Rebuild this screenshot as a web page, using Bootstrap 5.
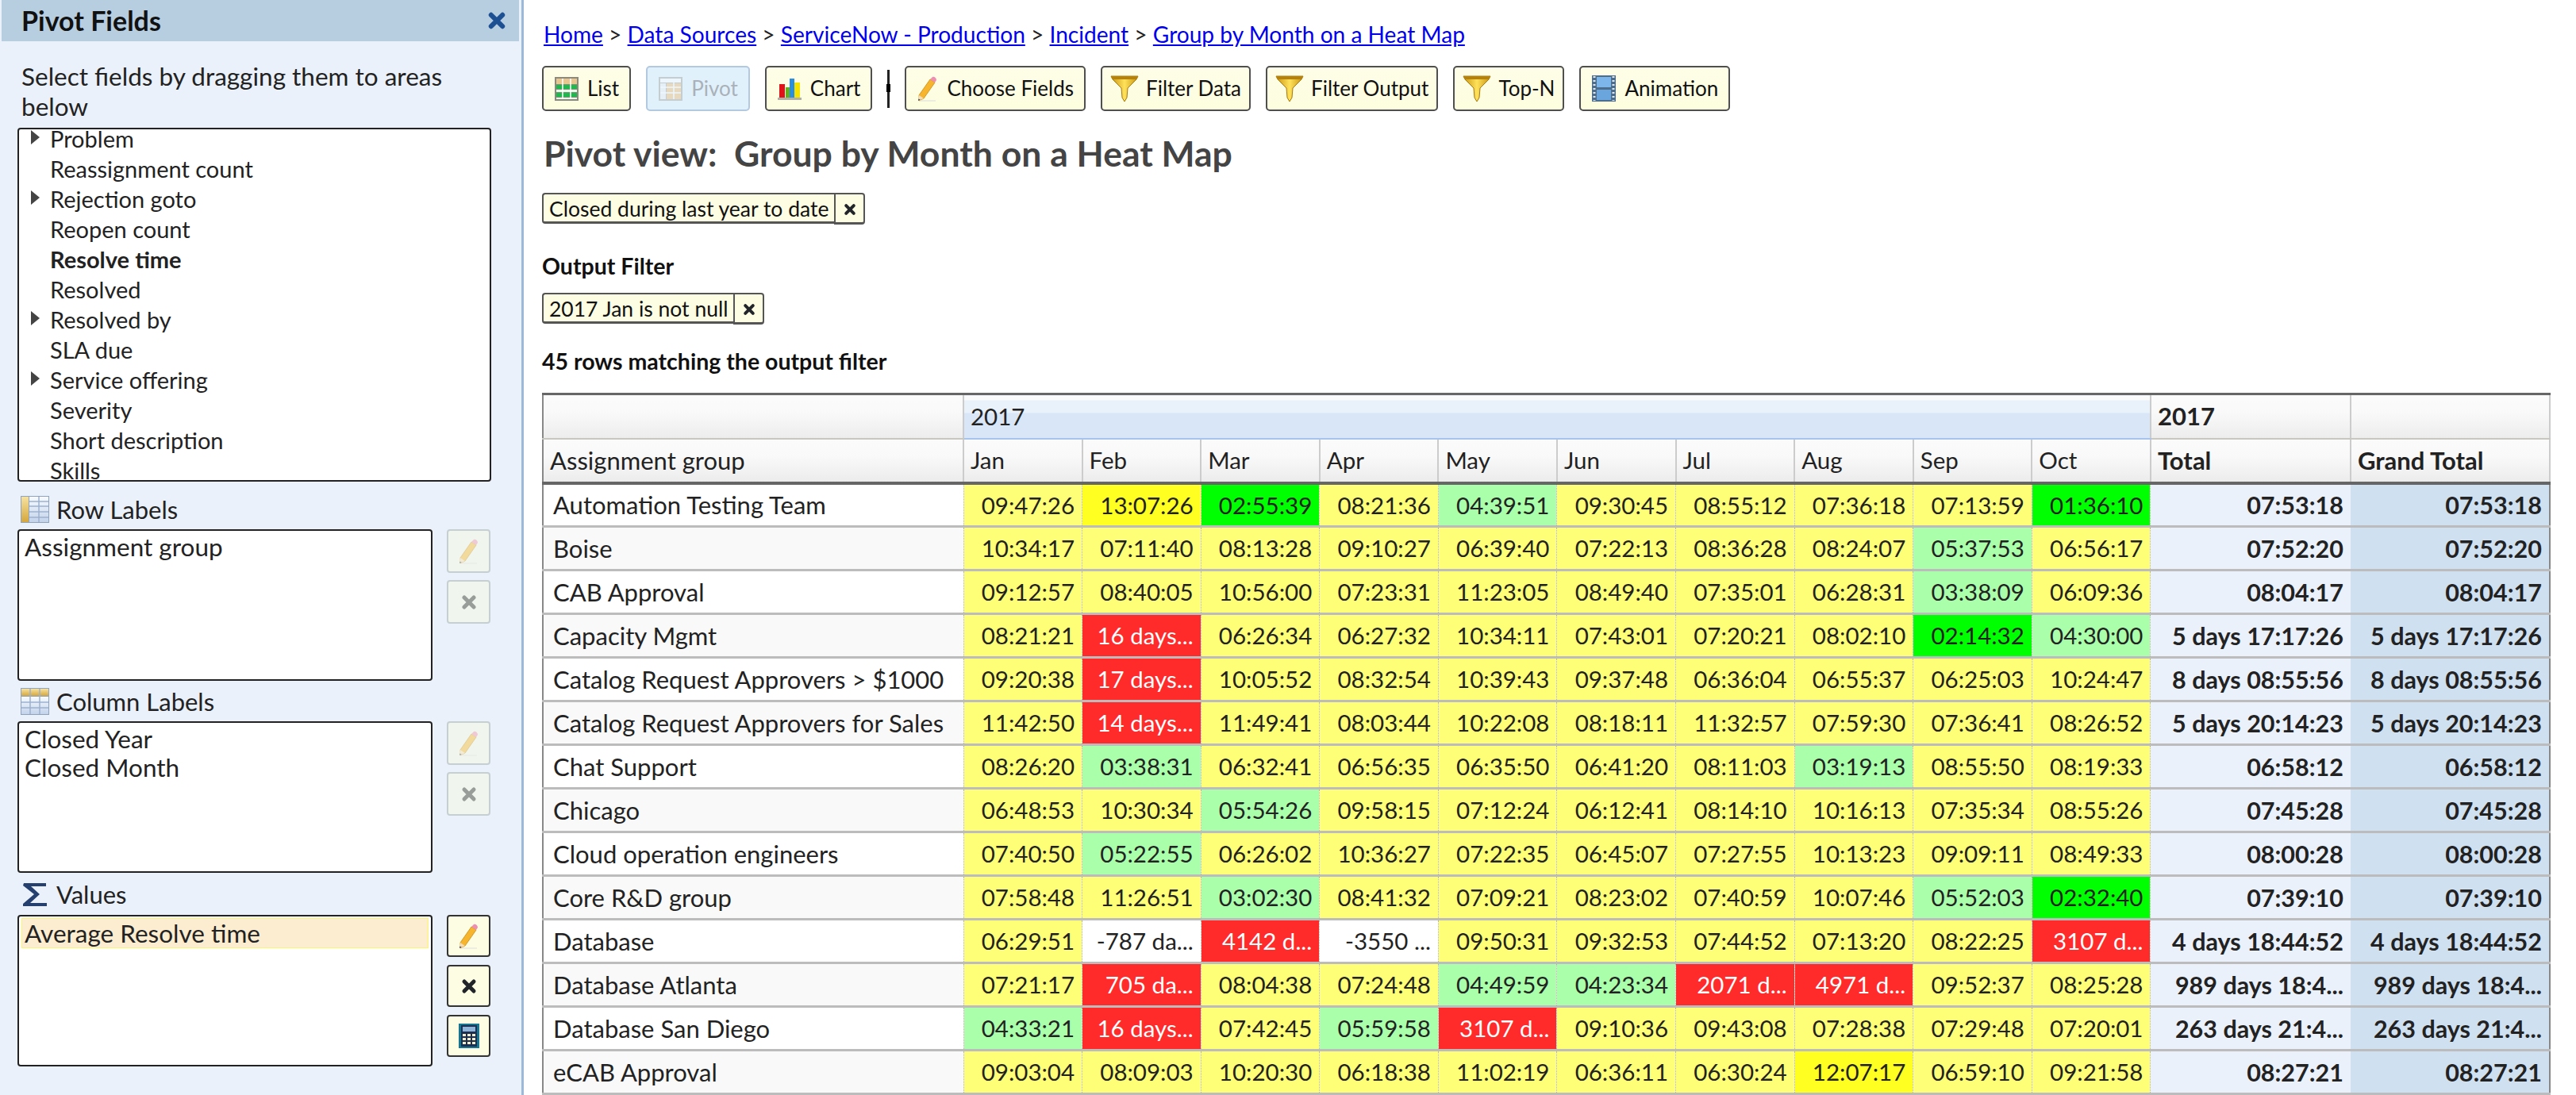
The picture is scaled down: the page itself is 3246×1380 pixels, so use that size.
<!DOCTYPE html>
<html lang="en">
<head>
    <meta charset="UTF-8">
    <title>Pivot view: Group by Month on a Heat Map</title>
    <link href="https://cdn.jsdelivr.net/npm/bootstrap@5.3.0/dist/css/bootstrap.min.css" rel="stylesheet">
    <style>
        html, body { height: 100%; }
        body {
            background: #fff;
            color: #222;
            font-family: "Lato", "Liberation Sans", sans-serif;
            font-size: 29px;
            line-height: 38px;
            overflow: hidden;
        }
        .page-wrap { width: 3246px; height: 1380px; }

        /* left panel */
        .side-panel {
            width: 660px;
            flex: none;
            background: #eaf1fa;
            border-right: 3px solid #9db9da;
            padding-left: 2px;
        }
        .panel-head {
            height: 52px;
            width: 652px;
            background: #b7cde0;
            padding: 0 16px 0 25px;
            font-size: 34px;
            font-weight: 700;
            color: #111;
        }
        .panel-close { color: #1d4f93; }
        .panel-intro { margin: 25px 60px 8px 25px; font-size: 31.5px; }
        .field-box {
            width: 597px;
            height: 446px;
            margin-left: 20px;
            background: #fff;
            border: 2px solid #222;
            border-radius: 4px;
            overflow: hidden;
        }
        .field-list { margin: -7px 0 0 0; padding: 0; list-style: none; }
        .field-list li { height: 38px; padding-left: 39px; position: relative; }
        .tree-arrow {
            position: absolute;
            left: 15px;
            top: 8px;
            width: 0;
            height: 0;
            border-left: 11px solid #444;
            border-top: 9px solid transparent;
            border-bottom: 9px solid transparent;
        }
        .area-label { height: 51px; margin-left: 24px; gap: 9px; font-size: 31px; }
        .area-label.first-label { margin-top: 9px; }
        .area-label.last-label { height: 53px; }
        .area-row { margin-left: 20px; width: 598px; gap: 18px; }
        .area-box {
            width: 523px;
            height: 191px;
            background: #fff;
            border: 2px solid #222;
            border-radius: 4px;
            padding: 2px 4px;
            line-height: 36px;
            font-size: 31.5px;
        }
        .area-box div { padding: 0 3px; height: 36px; }
        .area-box .picked {
            margin-top: 1px;
            background: #fdedd0;
            box-shadow: 0 0 0 1px #fbf66a;
        }
        .area-tools { gap: 9px; }
        .tool-btn {
            width: 55px;
            height: 55px;
            padding: 0;
            border: 2px solid #333;
            border-radius: 4px;
            background: #fdfde3;
            line-height: 1;
        }
        .tool-btn:disabled { border: 2px solid #c6cfd2; background: #f0f5ee; opacity: 1; }
        .tool-btn:disabled svg { opacity: .42; }
        .value-tools { gap: 10px; }
        .value-tools .tool-btn { height: 53px; }

        /* main column */
        .main-col { padding: 25px 34px 0 23px; min-width: 0; }
        .crumbs { height: 36px; line-height: 36px; padding-left: 2px; font-size: 28.1px; margin-bottom: 22px; }
        .crumbs a { color: #0000ee; }
        .tool-row { gap: 19px; height: 57px; }
        .bar-btn {
            height: 57px;
            padding: 0 13px;
            gap: 10px;
            font-size: 26px;
            color: #111;
            background: linear-gradient(#fefee8, #fdfddf);
            border: 2px solid #4f4f4f;
            border-radius: 5px;
        }
        .bar-btn.funnel-btn { padding: 0 10px; gap: 9px; }
        .bar-btn:disabled { color: #aab1b8; background: #e1f1fc; border-color: #b3c9e0; opacity: 1; }
        .bar-btn:disabled svg { opacity: .4; }
        .bar-split { width: 3px; height: 48px; background: #222; position: relative; }
        .bar-split::after {
            content: "";
            position: absolute;
            left: -1px;
            top: 18px;
            width: 5px;
            height: 10px;
            background: #000;
        }
        .view-title {
            margin: 28px 0 0;
            padding-left: 2px;
            height: 50px;
            font-size: 44.5px;
            line-height: 50px;
            font-weight: 700;
            color: #444;
            white-space: pre;
        }
        .tag-row { margin-top: 25px; }
        .tag-row-output { margin-top: 16px; }
        .tag-text {
            height: 39px;
            padding: 0 7px;
            line-height: 36px;
            font-size: 26.5px;
            background: #fdfde3;
            border: 2px solid #555;
            border-bottom-width: 3px;
            border-right: 0;
            border-radius: 4px 0 0 4px;
            color: #111;
        }
        .tag-x {
            width: 39px;
            height: 40px;
            padding: 0;
            background: #fdfde3;
            border: 2px solid #555;
            border-bottom-width: 3px;
            border-radius: 0 4px 4px 0;
        }
        .sub-head { font-weight: 700; font-size: 28.5px; color: #111; line-height: 36px; margin-top: 34px; }
        .rows-note { margin-top: 28px; }

        /* pivot table */
        .pivot-table {
            width: 2529px;
            table-layout: fixed;
            border-collapse: collapse;
            color: #222;
            font-size: 29.5px;
            line-height: 1;
            margin-top: 22px;
            border-top: 3px solid #666;
            border-left: 2px solid #888;
            border-right: 2px solid #888;
        }
        .col-group { width: 530px; }
        .col-month { width: 149.6px; }
        .col-total { width: 252px; }
        .col-grand { width: 251px; }
        .pivot-table th {
            height: 56px;
            padding: 0 8px;
            font-weight: 400;
            font-size: 31px;
            border-right: 2px solid #ccc;
            border-bottom: 2px solid #c8c8c0;
            background: linear-gradient(#fbfbfb 0, #f9f9f9 40%, #ececec 100%);
            white-space: nowrap;
        }
        .pivot-table tr.head-low th { border-bottom: 4px solid #666; height: 56px; }
        .pivot-table tr.head-low th.month-head { font-size: 29.5px; }
        .pivot-table th.year-band {
            font-size: 29.5px;
            background: linear-gradient(#fafafa 0 6px, #e9f1fb 6px 40%, #d8e6f8 40%);
            border-bottom: 2px solid #a9c4ec;
        }
        .pivot-table th.sum-head { font-weight: 700; }
        .pivot-table td {
            height: 55px;
            padding: 0 9px;
            text-align: right;
            white-space: nowrap;
            overflow: hidden;
            background: #ffff77;
            border-right: 1px dotted #b5b5a0;
            border-bottom: 3px solid #bcbcbc;
        }
        .pivot-table td.group-name { text-align: left; padding-left: 12px; font-size: 31px; background: #fff; }
        .pivot-table tr:nth-child(even) td.group-name { background: #f9f9f9; }
        .pivot-table td.heat-soft { background: #aaffaa; }
        .pivot-table td.heat-good { background: #00ff00; }
        .pivot-table td.heat-bad { background: #ff2a2a; color: #fff; }
        .pivot-table td.heat-warm { background: #ffff22; }
        .pivot-table td.heat-none { background: #fff; }
        .pivot-table td.sum-col { background: #eaf1fb; font-weight: 700; font-size: 30.5px; border-right: 0; }
        .pivot-table td.grand-col { background: #cfe0f0; font-weight: 700; font-size: 30.5px; border-right: 0; }
    </style>
</head>
<body>
<svg width="0" height="0" class="d-block">
    <defs>
        <linearGradient id="funnelFill" x1="0" x2="1" y1="0" y2="0">
            <stop offset="0" stop-color="#c9920f"/><stop offset=".5" stop-color="#ffe25a"/><stop offset="1" stop-color="#c9920f"/>
        </linearGradient>
        <linearGradient id="rowShade" x1="0" x2="0" y1="0" y2="1">
            <stop offset="0" stop-color="#f7fbff"/><stop offset="1" stop-color="#c3d3ea"/>
        </linearGradient>
        <linearGradient id="goldShade" x1="0" x2="0" y1="0" y2="1">
            <stop offset="0" stop-color="#f6e2a0"/><stop offset="1" stop-color="#d6a73c"/>
        </linearGradient>
        <symbol id="ic-x" viewBox="0 0 20 20">
            <path d="M4 4l12 12M16 4L4 16" stroke="currentColor" stroke-width="5" stroke-linecap="round" fill="none"/>
        </symbol>
        <symbol id="ic-list" viewBox="0 0 32 32">
            <rect x="1" y="1" width="30" height="30" fill="#8a8a80"/>
            <rect x="3" y="3" width="26" height="7" fill="#e8c690"/>
            <path d="M3 11h26v5H3zM3 21h26v5H3z" fill="#1fb84c"/>
            <path d="M3 17h26v3H3zM3 27h26v2H3z" fill="#e6f8e6"/>
            <path d="M11 3v26M21 3v26" stroke="#fff" stroke-width="1.5"/>
        </symbol>
        <symbol id="ic-pivot" viewBox="0 0 32 32">
            <rect x="1" y="1" width="30" height="30" fill="#9a9a90"/>
            <rect x="3" y="3" width="26" height="5" fill="#fff"/>
            <rect x="11" y="9" width="18" height="20" fill="#f2b667"/>
            <rect x="3" y="9" width="7" height="20" fill="#eee"/>
            <path d="M20 3v26M3 14h26M3 21h26" stroke="#fff" stroke-width="1.5"/>
        </symbol>
        <symbol id="ic-chart" viewBox="0 0 32 32">
            <rect x="3" y="10" width="7" height="17" fill="#e2121a"/>
            <rect x="11" y="14" width="5" height="13" fill="#62b21e"/>
            <rect x="16" y="3" width="6" height="24" fill="#2a8fe0"/>
            <rect x="22" y="8" width="7" height="19" fill="#f7e300"/>
            <rect x="1" y="27" width="30" height="3" fill="#b0b0a8"/>
        </symbol>
        <symbol id="ic-pencil" viewBox="0 0 28 33">
            <path d="M3 25L17 5l6 4L9 29l-6 3z" fill="#f6b52c" stroke="#c98a12" stroke-width=".8"/>
            <path d="M17 5l3-3c2-1 5 1 5 4l-2 3z" fill="#ee8fb2"/>
            <path d="M2 32l1-7 6 4z" fill="#f4dcb8"/>
            <path d="M2 32l.4-2.5 2.4 1.2z" fill="#444"/>
            <path d="M4 32h20" stroke="#ddd" stroke-width="1"/>
        </symbol>
        <symbol id="ic-funnel" viewBox="0 0 36 34">
            <path d="M1 1h34l-2 4-11 11-1 12-3 5-3-5-1-12L3 5z" fill="url(#funnelFill)" stroke="#a8790c" stroke-width="1"/>
            <path d="M1 1h34l-2 4H3z" fill="#b5820e"/>
        </symbol>
        <symbol id="ic-film" viewBox="0 0 32 33">
            <rect x="1" y="0" width="30" height="33" fill="#4d6d8c"/>
            <rect x="7" y="2" width="18" height="13" fill="#7db6ea"/>
            <rect x="7" y="18" width="18" height="13" fill="#6aa5de"/>
            <path d="M4 1v31M28 1v31" stroke="#dfe8f0" stroke-width="3" stroke-dasharray="2 3"/>
        </symbol>
        <symbol id="ic-rows" viewBox="0 0 36 34">
            <rect width="36" height="34" fill="#8fa3bd"/>
            <rect x="1" y="1" width="9" height="32" fill="url(#goldShade)"/>
            <rect x="11" y="1" width="24" height="32" fill="url(#rowShade)"/>
            <path d="M23 1v32M11 7h24M11 13h24M11 20h24M11 27h24" stroke="#9db1cf" stroke-width="1.5"/>
        </symbol>
        <symbol id="ic-cols" viewBox="0 0 36 34">
            <rect width="36" height="34" fill="#8fa3bd"/>
            <rect x="1" y="1" width="34" height="9" fill="url(#goldShade)"/>
            <rect x="1" y="11" width="34" height="22" fill="url(#rowShade)"/>
            <path d="M12 1v32M24 1v32M1 18h34M1 25h34" stroke="#9db1cf" stroke-width="1.5"/>
        </symbol>
        <symbol id="ic-sigma" viewBox="0 0 36 34">
            <path d="M4 3h28v4H13l11 10-12 11h21v4H3v-3l14-12L3 6z" fill="#25406e"/>
        </symbol>
        <symbol id="ic-calc" viewBox="0 0 28 33">
            <rect x="1" y="1" width="26" height="31" fill="#17768f"/>
            <rect x="4" y="3" width="20" height="27" fill="#1c2f52"/>
            <rect x="6" y="5" width="16" height="6" fill="#8fb4d8"/>
            <path d="M6 14h4v3H6zM12 14h4v3h-4zM18 14h4v3h-4zM6 19h4v3H6zM12 19h4v3h-4zM18 19h4v3h-4zM6 24h4v3H6zM12 24h4v3h-4zM18 24h4v3h-4z" fill="#f4eec0"/>
        </symbol>
    </defs>
</svg>

<div class="page-wrap d-flex">
    <!-- Pivot Fields panel -->
    <aside class="side-panel">
        <div class="panel-head d-flex align-items-center justify-content-between">
            <span>Pivot Fields</span>
            <svg width="24" height="26" class="panel-close"><use href="#ic-x"/></svg>
        </div>
        <div class="panel-intro">Select fields by dragging them to areas below</div>
        <div class="field-box">
            <ul class="field-list">
                <li><span class="tree-arrow"></span>Problem</li>
                <li>Reassignment count</li>
                <li><span class="tree-arrow"></span>Rejection goto</li>
                <li>Reopen count</li>
                <li class="fw-bold">Resolve time</li>
                <li>Resolved</li>
                <li><span class="tree-arrow"></span>Resolved by</li>
                <li>SLA due</li>
                <li><span class="tree-arrow"></span>Service offering</li>
                <li>Severity</li>
                <li>Short description</li>
                <li>Skills</li>
            </ul>
        </div>

        <div class="area-label first-label d-flex align-items-center">
            <svg width="36" height="34"><use href="#ic-rows"/></svg><span>Row Labels</span>
        </div>
        <div class="area-row d-flex">
            <div class="area-box"><div>Assignment group</div></div>
            <div class="area-tools d-flex flex-column">
                <button class="btn tool-btn" disabled><svg width="28" height="33"><use href="#ic-pencil"/></svg></button>
                <button class="btn tool-btn text-dark" disabled><svg width="20" height="20"><use href="#ic-x"/></svg></button>
            </div>
        </div>

        <div class="area-label d-flex align-items-center">
            <svg width="36" height="34"><use href="#ic-cols"/></svg><span>Column Labels</span>
        </div>
        <div class="area-row d-flex">
            <div class="area-box"><div>Closed Year</div><div>Closed Month</div></div>
            <div class="area-tools d-flex flex-column">
                <button class="btn tool-btn" disabled><svg width="28" height="33"><use href="#ic-pencil"/></svg></button>
                <button class="btn tool-btn text-dark" disabled><svg width="20" height="20"><use href="#ic-x"/></svg></button>
            </div>
        </div>

        <div class="area-label last-label d-flex align-items-center">
            <svg width="36" height="34"><use href="#ic-sigma"/></svg><span>Values</span>
        </div>
        <div class="area-row d-flex">
            <div class="area-box"><div class="picked">Average Resolve time</div></div>
            <div class="area-tools value-tools d-flex flex-column">
                <button class="btn tool-btn"><svg width="28" height="33"><use href="#ic-pencil"/></svg></button>
                <button class="btn tool-btn text-dark"><svg width="20" height="20"><use href="#ic-x"/></svg></button>
                <button class="btn tool-btn"><svg width="28" height="33"><use href="#ic-calc"/></svg></button>
            </div>
        </div>
    </aside>

    <!-- Report -->
    <main class="main-col flex-grow-1">
        <div class="crumbs"><a href="#">Home</a> &gt; <a href="#">Data Sources</a> &gt; <a href="#">ServiceNow - Production</a> &gt; <a href="#">Incident</a> &gt; <a href="#">Group by Month on a Heat Map</a></div>

        <div class="tool-row d-flex align-items-center">
            <button class="btn bar-btn d-flex align-items-center"><svg width="32" height="32"><use href="#ic-list"/></svg>List</button>
            <button class="btn bar-btn d-flex align-items-center" disabled><svg width="32" height="32"><use href="#ic-pivot"/></svg>Pivot</button>
            <button class="btn bar-btn d-flex align-items-center"><svg width="32" height="32"><use href="#ic-chart"/></svg>Chart</button>
            <span class="bar-split"></span>
            <button class="btn bar-btn d-flex align-items-center"><svg width="28" height="33"><use href="#ic-pencil"/></svg>Choose Fields</button>
            <button class="btn bar-btn funnel-btn d-flex align-items-center"><svg width="36" height="34"><use href="#ic-funnel"/></svg>Filter Data</button>
            <button class="btn bar-btn funnel-btn d-flex align-items-center"><svg width="36" height="34"><use href="#ic-funnel"/></svg>Filter Output</button>
            <button class="btn bar-btn funnel-btn d-flex align-items-center"><svg width="36" height="34"><use href="#ic-funnel"/></svg>Top-N</button>
            <button class="btn bar-btn d-flex align-items-center"><svg width="32" height="33"><use href="#ic-film"/></svg>Animation</button>
        </div>

        <h1 class="view-title">Pivot view:  Group by Month on a Heat Map</h1>

        <div class="tag-row d-flex">
            <span class="tag-text">Closed during last year to date</span>
            <button class="btn tag-x text-dark"><svg width="16" height="18"><use href="#ic-x"/></svg></button>
        </div>

        <div class="sub-head">Output Filter</div>
        <div class="tag-row-output d-flex">
            <span class="tag-text">2017 Jan is not null</span>
            <button class="btn tag-x text-dark"><svg width="16" height="18"><use href="#ic-x"/></svg></button>
        </div>

        <div class="sub-head rows-note">45 rows matching the output filter</div>

        <table class="pivot-table">
            <colgroup>
                <col class="col-group">
                <col span="10" class="col-month">
                <col class="col-total">
                <col class="col-grand">
            </colgroup>
            <thead>
                <tr>
                    <th></th>
                    <th colspan="10" class="year-band">2017</th>
                    <th class="sum-head">2017</th>
                    <th></th>
                </tr>
                <tr class="head-low">
                    <th>Assignment group</th>
                    <th class="month-head">Jan</th><th class="month-head">Feb</th><th class="month-head">Mar</th><th class="month-head">Apr</th><th class="month-head">May</th><th class="month-head">Jun</th><th class="month-head">Jul</th><th class="month-head">Aug</th><th class="month-head">Sep</th><th class="month-head">Oct</th>
                    <th class="sum-head">Total</th>
                    <th class="sum-head">Grand Total</th>
                </tr>
            </thead>
            <tbody>
                <tr><td class="group-name">Automation Testing Team</td><td>09:47:26</td><td class="heat-warm">13:07:26</td><td class="heat-good">02:55:39</td><td>08:21:36</td><td class="heat-soft">04:39:51</td><td>09:30:45</td><td>08:55:12</td><td>07:36:18</td><td>07:13:59</td><td class="heat-good">01:36:10</td><td class="sum-col">07:53:18</td><td class="grand-col">07:53:18</td></tr>
                <tr><td class="group-name">Boise</td><td>10:34:17</td><td>07:11:40</td><td>08:13:28</td><td>09:10:27</td><td>06:39:40</td><td>07:22:13</td><td>08:36:28</td><td>08:24:07</td><td class="heat-soft">05:37:53</td><td>06:56:17</td><td class="sum-col">07:52:20</td><td class="grand-col">07:52:20</td></tr>
                <tr><td class="group-name">CAB Approval</td><td>09:12:57</td><td>08:40:05</td><td>10:56:00</td><td>07:23:31</td><td>11:23:05</td><td>08:49:40</td><td>07:35:01</td><td>06:28:31</td><td class="heat-soft">03:38:09</td><td>06:09:36</td><td class="sum-col">08:04:17</td><td class="grand-col">08:04:17</td></tr>
                <tr><td class="group-name">Capacity Mgmt</td><td>08:21:21</td><td class="heat-bad">16 days...</td><td>06:26:34</td><td>06:27:32</td><td>10:34:11</td><td>07:43:01</td><td>07:20:21</td><td>08:02:10</td><td class="heat-good">02:14:32</td><td class="heat-soft">04:30:00</td><td class="sum-col">5 days 17:17:26</td><td class="grand-col">5 days 17:17:26</td></tr>
                <tr><td class="group-name">Catalog Request Approvers &gt; $1000</td><td>09:20:38</td><td class="heat-bad">17 days...</td><td>10:05:52</td><td>08:32:54</td><td>10:39:43</td><td>09:37:48</td><td>06:36:04</td><td>06:55:37</td><td>06:25:03</td><td>10:24:47</td><td class="sum-col">8 days 08:55:56</td><td class="grand-col">8 days 08:55:56</td></tr>
                <tr><td class="group-name">Catalog Request Approvers for Sales</td><td>11:42:50</td><td class="heat-bad">14 days...</td><td>11:49:41</td><td>08:03:44</td><td>10:22:08</td><td>08:18:11</td><td>11:32:57</td><td>07:59:30</td><td>07:36:41</td><td>08:26:52</td><td class="sum-col">5 days 20:14:23</td><td class="grand-col">5 days 20:14:23</td></tr>
                <tr><td class="group-name">Chat Support</td><td>08:26:20</td><td class="heat-soft">03:38:31</td><td>06:32:41</td><td>06:56:35</td><td>06:35:50</td><td>06:41:20</td><td>08:11:03</td><td class="heat-soft">03:19:13</td><td>08:55:50</td><td>08:19:33</td><td class="sum-col">06:58:12</td><td class="grand-col">06:58:12</td></tr>
                <tr><td class="group-name">Chicago</td><td>06:48:53</td><td>10:30:34</td><td class="heat-soft">05:54:26</td><td>09:58:15</td><td>07:12:24</td><td>06:12:41</td><td>08:14:10</td><td>10:16:13</td><td>07:35:34</td><td>08:55:26</td><td class="sum-col">07:45:28</td><td class="grand-col">07:45:28</td></tr>
                <tr><td class="group-name">Cloud operation engineers</td><td>07:40:50</td><td class="heat-soft">05:22:55</td><td>06:26:02</td><td>10:36:27</td><td>07:22:35</td><td>06:45:07</td><td>07:27:55</td><td>10:13:23</td><td>09:09:11</td><td>08:49:33</td><td class="sum-col">08:00:28</td><td class="grand-col">08:00:28</td></tr>
                <tr><td class="group-name">Core R&amp;D group</td><td>07:58:48</td><td>11:26:51</td><td class="heat-soft">03:02:30</td><td>08:41:32</td><td>07:09:21</td><td>08:23:02</td><td>07:40:59</td><td>10:07:46</td><td class="heat-soft">05:52:03</td><td class="heat-good">02:32:40</td><td class="sum-col">07:39:10</td><td class="grand-col">07:39:10</td></tr>
                <tr><td class="group-name">Database</td><td>06:29:51</td><td class="heat-none">-787 da...</td><td class="heat-bad">4142 d...</td><td class="heat-none">-3550 ...</td><td>09:50:31</td><td>09:32:53</td><td>07:44:52</td><td>07:13:20</td><td>08:22:25</td><td class="heat-bad">3107 d...</td><td class="sum-col">4 days 18:44:52</td><td class="grand-col">4 days 18:44:52</td></tr>
                <tr><td class="group-name">Database Atlanta</td><td>07:21:17</td><td class="heat-bad">705 da...</td><td>08:04:38</td><td>07:24:48</td><td class="heat-soft">04:49:59</td><td class="heat-soft">04:23:34</td><td class="heat-bad">2071 d...</td><td class="heat-bad">4971 d...</td><td>09:52:37</td><td>08:25:28</td><td class="sum-col">989 days 18:4...</td><td class="grand-col">989 days 18:4...</td></tr>
                <tr><td class="group-name">Database San Diego</td><td class="heat-soft">04:33:21</td><td class="heat-bad">16 days...</td><td>07:42:45</td><td class="heat-soft">05:59:58</td><td class="heat-bad">3107 d...</td><td>09:10:36</td><td>09:43:08</td><td>07:28:38</td><td>07:29:48</td><td>07:20:01</td><td class="sum-col">263 days 21:4...</td><td class="grand-col">263 days 21:4...</td></tr>
                <tr><td class="group-name">eCAB Approval</td><td>09:03:04</td><td>08:09:03</td><td>10:20:30</td><td>06:18:38</td><td>11:02:19</td><td>06:36:11</td><td>06:30:24</td><td class="heat-warm">12:07:17</td><td>06:59:10</td><td>09:21:58</td><td class="sum-col">08:27:21</td><td class="grand-col">08:27:21</td></tr>
            </tbody>
        </table>
    </main>
</div>
</body>
</html>
